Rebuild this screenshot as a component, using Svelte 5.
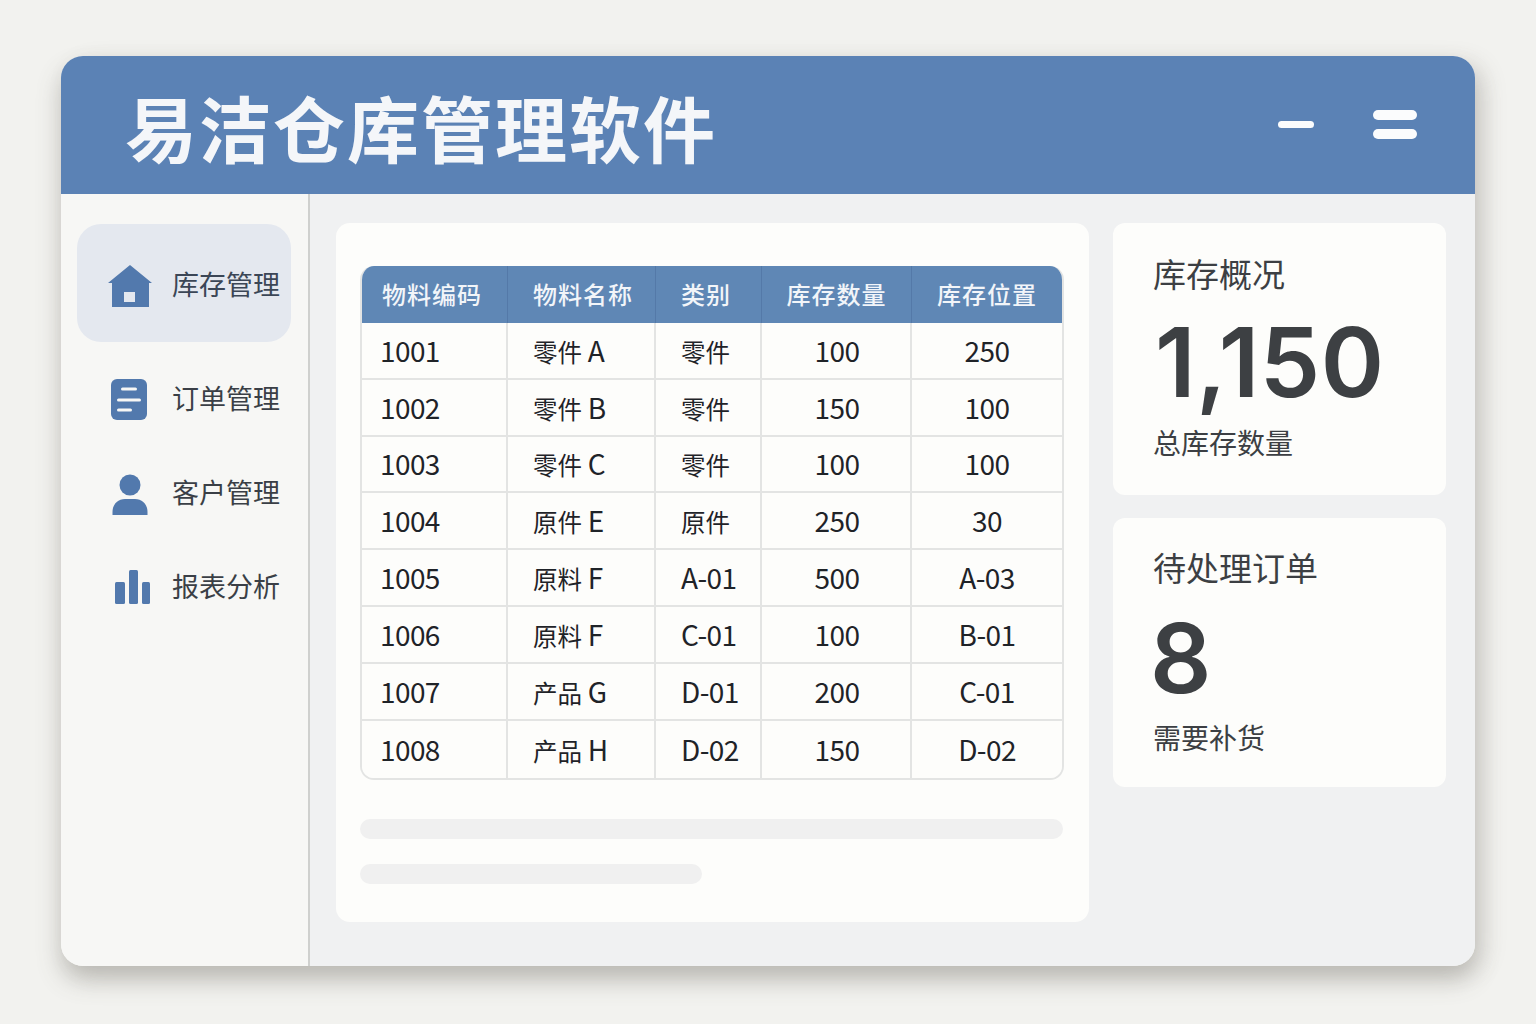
<script>
  const navItems = [
    { label: "库存管理", icon: "home", active: true },
    { label: "订单管理", icon: "doc" },
    { label: "客户管理", icon: "user" },
    { label: "报表分析", icon: "bars" },
  ];

  const columns = ["物料编码", "物料名称", "类别", "库存数量", "库存位置"];

  const rows = [
    ["1001", "零件 A", "零件", "100", "250"],
    ["1002", "零件 B", "零件", "150", "100"],
    ["1003", "零件 C", "零件", "100", "100"],
    ["1004", "原件 E", "原件", "250", "30"],
    ["1005", "原料 F", "A-01", "500", "A-03"],
    ["1006", "原料 F", "C-01", "100", "B-01"],
    ["1007", "产品 G", "D-01", "200", "C-01"],
    ["1008", "产品 H", "D-02", "150", "D-02"],
  ];

  // chinese part of a cell is set smaller than the latin part
  const chinese = (cell) => cell.match(/^[^\x00-\x7f]*/)[0];
</script>

<div class="page">
  <div class="window">
    <header>
      <h1>易洁仓库管理软件</h1>
      <div class="controls">
        <span class="minus"></span>
        <span class="menu"><i></i><i></i></span>
      </div>
    </header>

    <div class="body">
      <aside>
        {#each navItems as item}
          <div class="nav-item" class:active={item.active}>
            <svg width="48" height="48" viewBox="0 0 48 48">
              {#if item.icon === "home"}
                <path d="M24 6 L46 24 L43 24 L43 48 L6 48 L6 24 L2 24 Z" fill="#5279ad" />
                <rect x="18" y="33" width="11" height="10" fill="#e4e8ef" />
              {:else if item.icon === "doc"}
                <rect x="5" y="4" width="36" height="41" rx="6" fill="#5279ad" />
                <rect x="15" y="12.5" width="16" height="3" rx="1.5" fill="#f7f7f5" />
                <rect x="11" y="23.5" width="24" height="3" rx="1.5" fill="#f7f7f5" />
                <rect x="11" y="33.5" width="15" height="3" rx="1.5" fill="#f7f7f5" />
              {:else if item.icon === "user"}
                <circle cx="24" cy="16" r="10.5" fill="#5279ad" />
                <path d="M6.5 46 V43 C6.5 35 12 30 19 30 H29 C36 30 41.5 35 41.5 43 V46 Z" fill="#5279ad" />
              {:else}
                <rect x="9" y="19" width="10" height="22" rx="1.5" fill="#5279ad" />
                <rect x="23" y="7" width="9" height="34" rx="1.5" fill="#5279ad" />
                <rect x="36" y="19" width="8" height="22" rx="1.5" fill="#5279ad" />
              {/if}
            </svg>
            <span>{item.label}</span>
          </div>
        {/each}
      </aside>

      <main>
        <section class="table-card">
          <table>
            <colgroup>
              <col style="width: 146px" />
              <col style="width: 148px" />
              <col style="width: 106px" />
              <col style="width: 150px" />
              <col style="width: 150px" />
            </colgroup>
            <thead>
              <tr>
                {#each columns as col}
                  <th>{col}</th>
                {/each}
              </tr>
            </thead>
            <tbody>
              {#each rows as row}
                <tr>
                  {#each row as cell}
                    <td><span class="cn">{chinese(cell)}</span>{cell.slice(chinese(cell).length)}</td>
                  {/each}
                </tr>
              {/each}
            </tbody>
          </table>
          <div class="skeleton full"></div>
          <div class="skeleton short"></div>
        </section>

        <div class="stats">
          <section class="stat first">
            <h2>库存概况</h2>
            <div class="value">1,150</div>
            <p>总库存数量</p>
          </section>
          <section class="stat second">
            <h2>待处理订单</h2>
            <div class="value">8</div>
            <p>需要补货</p>
          </section>
        </div>
      </main>
    </div>
  </div>
</div>

<style>
  :global(body) {
    margin: 0;
    background: #f2f2ef;
    font-family: "Noto Sans CJK SC", "Noto Sans", sans-serif;
  }

  .page {
    height: 1024px;
    box-sizing: border-box;
    padding: 56px 61px 58px;
    overflow: hidden;
  }

  .window {
    width: 1414px;
    height: 910px;
    display: flex;
    flex-direction: column;
    border-radius: 22px;
    background: #f7f7f5;
    box-shadow: 0 14px 24px rgba(90, 85, 75, 0.3), 10px 6px 24px rgba(90, 85, 75, 0.12);
    overflow: hidden;
  }

  header {
    height: 138px;
    flex: none;
    display: flex;
    align-items: center;
    justify-content: space-between;
    padding: 0 58px 0 64px;
    background: #5b82b5;
  }

  h1 {
    margin: 0;
    font-size: 72px;
    font-weight: 700;
    line-height: 1;
    letter-spacing: 2px;
    color: #f4f6f9;
    position: relative;
    top: 1px;
  }

  .controls {
    display: flex;
    align-items: center;
    gap: 59px;
    position: relative;
    top: -1px;
  }

  .minus {
    display: block;
    width: 36px;
    height: 7px;
    border-radius: 4px;
    background: #fbfcfd;
  }

  .menu {
    display: flex;
    flex-direction: column;
    gap: 9px;
  }

  .menu i {
    display: block;
    width: 44px;
    height: 10px;
    border-radius: 5px;
    background: #fbfcfd;
  }

  .body {
    flex: 1;
    display: flex;
    min-height: 0;
  }

  aside {
    width: 214px;
    flex: none;
    padding: 30px 17px 0 16px;
    border-right: 2px solid #cfd0ce;
    background: #f7f7f5;
  }

  .nav-item {
    height: 94px;
    display: flex;
    align-items: center;
    gap: 18px;
    padding-left: 29px;
    font-size: 27px;
    color: #3a3f46;
    white-space: nowrap;
  }

  .nav-item span {
    margin-bottom: 4px;
  }

  .nav-item.active {
    height: 118px;
    margin-bottom: 10px;
    border-radius: 24px;
    background: #e4e8ef;
    color: #3b4656;
  }

  .nav-item.active span {
    margin-bottom: 0;
  }

  main {
    flex: 1;
    display: flex;
    gap: 24px;
    padding: 29px 29px 44px 26px;
    background: #f0f1f2;
  }

  .table-card {
    width: 703px;
    padding: 43px 26px 0 24px;
    border-radius: 14px;
    background: #fdfdfb;
  }

  table {
    width: 702px;
    table-layout: fixed;
    border-collapse: separate;
    border-spacing: 0;
    border-radius: 14px;
    overflow: hidden;
    border: 2px solid #e3e4e3;
    border-top: 0;
    box-sizing: border-box;
  }

  th {
    height: 54px;
    padding: 0 0 3px;
    background: #5f87b5;
    color: #f2f5f9;
    font-size: 24px;
    font-weight: 500;
    letter-spacing: 1px;
    text-align: center;
    border-right: 1px solid #5479a8;
  }

  th:first-child,
  td:first-child {
    text-align: left;
    padding-left: 18px;
  }

  th:first-child {
    padding-left: 20px;
  }

  th:nth-child(2),
  td:nth-child(2),
  th:nth-child(3),
  td:nth-child(3) {
    text-align: left;
    padding-left: 25px;
  }

  th:last-child,
  td:last-child {
    border-right: 0;
  }

  td {
    height: 53.8px;
    padding: 0 0 1px;
    box-sizing: content-box;
    font-size: 28px;
    letter-spacing: -0.6px;
    color: #1f2328;
    text-align: center;
    white-space: nowrap;
    border-right: 2px solid #e3e4e3;
    border-bottom: 2px solid #e3e4e3;
    background: #fdfdfb;
  }

  td:nth-child(4) {
    padding-left: 2px;
  }

  .cn {
    font-size: 24.5px;
    letter-spacing: 0;
  }

  tbody tr:last-child td {
    height: 56px;
    border-bottom: 0;
  }

  .skeleton {
    height: 20px;
    border-radius: 10px;
    background: #f0f0f0;
  }

  .skeleton.full {
    width: 703px;
    margin-top: 39px;
  }

  .skeleton.short {
    width: 342px;
    margin-top: 25px;
  }

  .stats {
    width: 333px;
    flex: none;
    display: flex;
    flex-direction: column;
    gap: 23px;
  }

  .stat {
    box-sizing: border-box;
    padding: 0 40px;
    border-radius: 12px;
    background: #fdfdfb;
    color: #3c3f43;
  }

  .stat.first {
    height: 272px;
  }

  .stat.second {
    height: 269px;
  }

  h2 {
    margin: 0;
    font-size: 33px;
    font-weight: 400;
    line-height: 48px;
  }

  .first h2 {
    padding-top: 26px;
  }

  .second h2 {
    padding-top: 25px;
  }

  .value {
    font-family: Inter, sans-serif;
    font-size: 96px;
    font-weight: 600;
    line-height: 100px;
    color: #3d4043;
    margin-top: 15px;
  }

  .first .value {
    margin-left: 2px;
    letter-spacing: 0.5px;
  }

  .second .value {
    margin-top: 17px;
    margin-left: -3px;
  }

  p {
    margin: 10px 0 0;
    font-size: 28px;
    line-height: 40px;
  }

  .second p {
    margin-top: 9px;
  }
</style>
